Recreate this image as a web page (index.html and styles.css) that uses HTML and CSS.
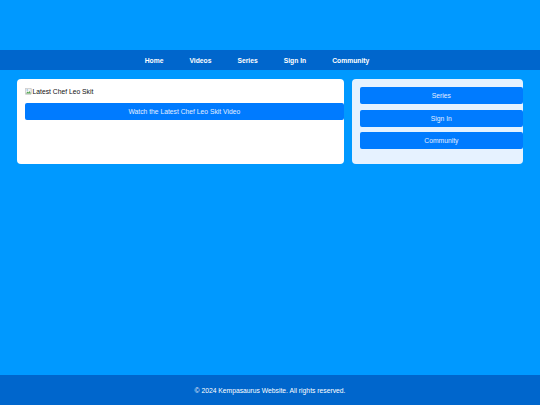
FILE: index.html
```html
<!DOCTYPE html>
<html lang="en">
<head>
    <meta charset="UTF-8">
    <meta name="viewport" content="width=device-width, initial-scale=1.0">
    <title>Kempasaurus Website</title>
    <link rel="stylesheet" href="styles.css">
</head>
<body>

    <!-- Header -->
    <header class="site-header"></header>

    <!-- Navigation -->
    <nav class="main-nav">
        <a href="#">Home</a>
        <a href="#">Videos</a>
        <a href="#">Series</a>
        <a href="#">Sign In</a>
        <a href="#">Community</a>
    </nav>

    <!-- Main Content -->
    <main class="content">
        <section class="latest-skit">
            <div class="skit-image">
                <svg class="broken-icon" width="7" height="7" viewBox="0 0 14 14">
                    <rect x="0.5" y="0.5" width="12" height="12" rx="1" fill="#f2f2f2" stroke="#9a9a9a"/>
                    <path d="M2 11 L5 7 L7 9 L9 6 L12 11 Z" fill="#5aa95a"/>
                    <circle cx="4.5" cy="4" r="1.5" fill="#7fb6e0"/>
                </svg>
                <span>Latest Chef Leo Skit</span>
            </div>
            <button class="watch-btn">Watch the Latest Chef Leo Skit Video</button>
        </section>

        <aside class="sidebar">
            <button class="side-btn">Series</button>
            <button class="side-btn">Sign In</button>
            <button class="side-btn">Community</button>
        </aside>
    </main>

    <!-- Footer -->
    <footer class="site-footer">
        <p>&copy; 2024 Kempasaurus Website. All rights reserved.</p>
    </footer>

</body>
</html>
```

FILE: styles.css
```css
/* General Styling */
body {
    font-family: "Liberation Sans", Arial, sans-serif;
    background-color: #0099ff;
    margin: 0;
    padding: 0;
    color: #333;
    height: 405px;
    display: flex;
    flex-direction: column;
    overflow: hidden;
}

/* Header */
.site-header {
    height: 50px;
}

/* Navigation */
.main-nav {
    background-color: #0066cc;
    height: 20px;
    display: flex;
    justify-content: center;
    align-items: center;
    gap: 26px;
    padding-right: 26px;
}

.main-nav a {
    color: white;
    font-size: 6.75px;
    font-weight: bold;
    text-decoration: none;
}

/* Main Content */
.content {
    flex: 1;
    display: flex;
    align-items: flex-start;
    gap: 8px;
    padding: 9px 17px;
}

.latest-skit, .sidebar {
    border-radius: 4px;
    padding: 8px;
    min-height: 69px;
}

.latest-skit {
    flex: 2;
    background-color: white;
}

.sidebar {
    flex: 1;
    background-color: #e6f2ff;
    display: flex;
    flex-direction: column;
    gap: 5.5px;
}

.skit-image {
    display: flex;
    align-items: center;
    height: 8px;
    font-size: 6.75px;
    color: #111;
}

.broken-icon {
    margin-right: 0.5px;
}

/* Buttons */
.watch-btn, .side-btn {
    background-color: #007bff;
    color: #e3eeff;
    border: none;
    border-radius: 2px;
    font-family: inherit;
    font-size: 6.75px;
    height: 17px;
    width: calc(100% + 8px);
    padding: 0;
    cursor: pointer;
}

.watch-btn {
    margin-top: 8px;
}

/* Footer */
.site-footer {
    background-color: #0066cc;
    height: 30px;
    display: flex;
    justify-content: center;
    align-items: center;
}

.site-footer p {
    margin: 0;
    color: white;
    font-size: 6.75px;
}
```
